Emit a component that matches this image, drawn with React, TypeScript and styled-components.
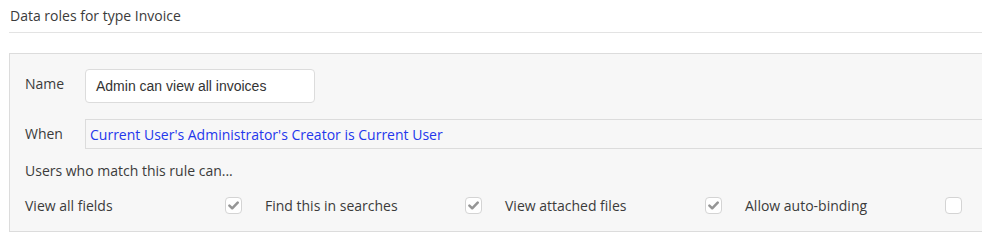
import React from "react";
import styled, { createGlobalStyle } from "styled-components";

const Global = createGlobalStyle`
  html, body { margin: 0; padding: 0; overflow: hidden; background: #fff; }
  body { font-family: "Open Sans", "Liberation Sans", sans-serif; font-size: 14px; color: #3b3b3b; }
`;

const Page = styled.div`
  width: 1010px;
  padding-left: 9px;
`;

const Title = styled.div`
  padding: 6px 0 6px 1px;
  line-height: 20px;
  font-size: 14px;
  border-bottom: 1px solid #e3e3e3;
`;

const Panel = styled.div`
  margin-top: 20px;
  background: #f7f7f7;
  border: 1px solid #dcdcdc;
  border-right: none;
  padding: 15px 0 17px 15px;
  display: flex;
  flex-direction: column;
`;

const FieldRow = styled.div<{ $h: number; $mb: number }>`
  display: flex;
  align-items: center;
  height: ${(p) => p.$h}px;
  margin-bottom: ${(p) => p.$mb}px;
`;

const Label = styled.div<{ $lift?: number }>`
  width: 60px;
  flex: none;
  line-height: 20px;
  margin-top: ${(p) => -(p.$lift ?? 0) * 2}px;
`;

const NameInput = styled.div`
  box-sizing: border-box;
  width: 230px;
  height: 34px;
  background: #fff;
  border: 1px solid #dcdcdc;
  border-radius: 4px;
  padding-left: 10px;
  display: flex;
  align-items: center;
  font-family: "Liberation Sans", Arial, sans-serif;
  font-size: 14px;
  color: #333;
`;

const WhenBox = styled.div`
  box-sizing: border-box;
  flex: 1;
  height: 30px;
  border: 1px solid #dcdcdc;
  border-right: none;
  padding-left: 4px;
  display: flex;
  align-items: center;
  color: #2437ec;
  background: #f7f7f7;
`;

const Caption = styled.div`
  line-height: 20px;
  margin: 12px 0 16px;
`;

const PermGrid = styled.div`
  display: grid;
  grid-template-columns: repeat(4, 217px);
  column-gap: 23px;
  height: 17px;
`;

const Perm = styled.div`
  display: flex;
  align-items: center;
  justify-content: space-between;
  height: 17px;
  line-height: 20px;
`;

const Box = styled.div`
  box-sizing: border-box;
  width: 17px;
  height: 17px;
  border: 1px solid #d4d4d4;
  border-radius: 4px;
  background: #fff;
  display: flex;
  align-items: center;
  justify-content: center;
`;

const Check = ({ on }: { on: boolean }) => (
  <Box>
    {on && (
      <svg width="11" height="9" viewBox="0 0 11 9">
        <path d="M1.4 4.6 L4.2 7.3 L9.7 1.7" fill="none" stroke="#969696" strokeWidth="2.5" strokeLinecap="round" strokeLinejoin="round" />
      </svg>
    )}
  </Box>
);

const perms = [
  { label: "View all fields", on: true },
  { label: "Find this in searches", on: true },
  { label: "View attached files", on: true },
  { label: "Allow auto-binding", on: false },
];

export default function App() {
  return (
    <>
      <Global />
      <Page>
        <Title>Data roles for type Invoice</Title>
        <Panel>
          <FieldRow $h={34} $mb={16}>
            <Label $lift={2}>Name</Label>
            <NameInput>Admin can view all invoices</NameInput>
          </FieldRow>
          <FieldRow $h={30} $mb={0}>
            <Label>When</Label>
            <WhenBox>Current User's Administrator's Creator is Current User</WhenBox>
          </FieldRow>
          <Caption>Users who match this rule can...</Caption>
          <PermGrid>
            {perms.map((p) => (
              <Perm key={p.label}>
                <span>{p.label}</span>
                <Check on={p.on} />
              </Perm>
            ))}
          </PermGrid>
        </Panel>
      </Page>
    </>
  );
}
